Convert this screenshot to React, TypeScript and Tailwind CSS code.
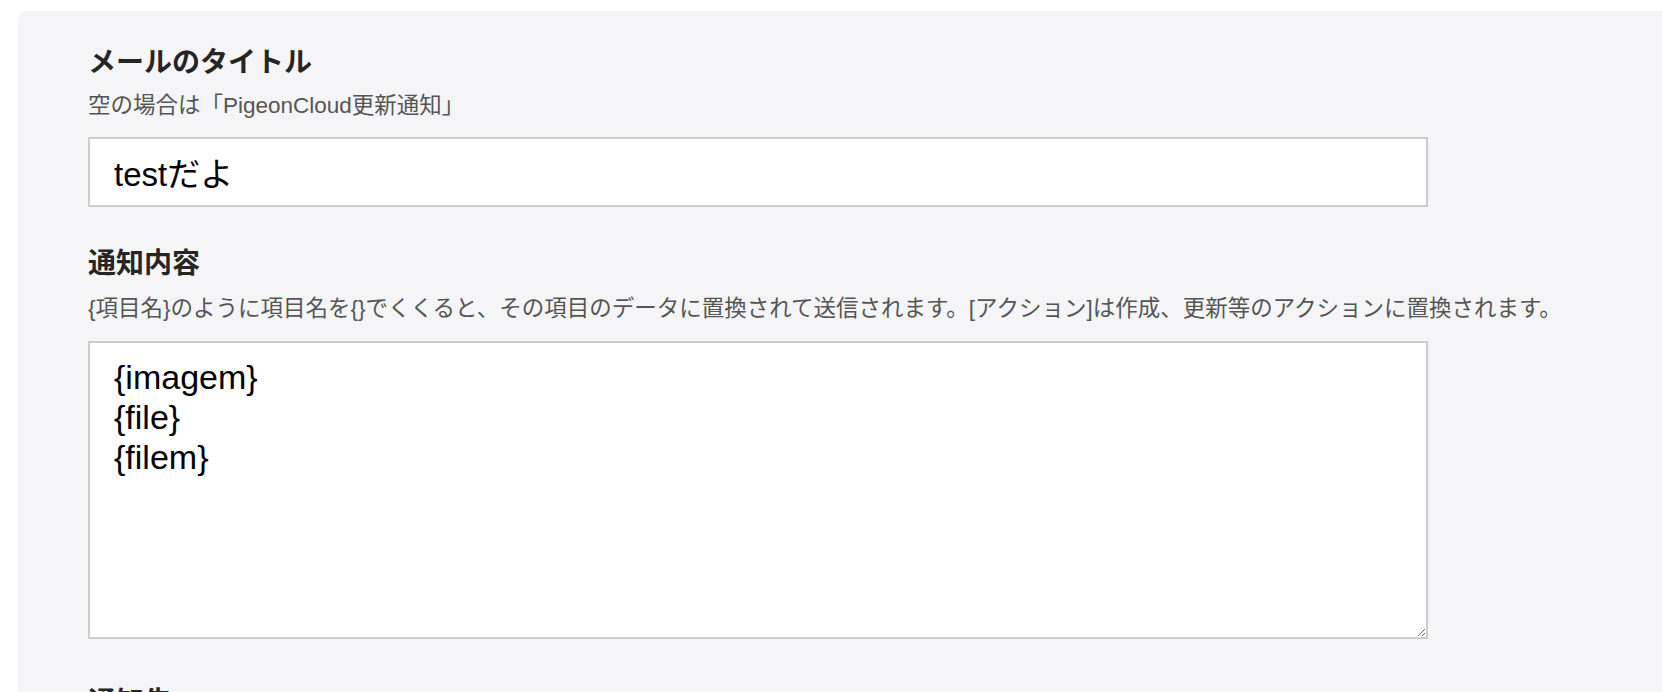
import { useState } from "react";

const font = "font-['Liberation_Sans','Noto_Sans_CJK_JP',sans-serif]";

function FieldLabel({ title, hint }: { title: string; hint: string }) {
  return (
    <>
      <h2 className="text-[28px] leading-[36px] font-bold text-[#252525]">{title}</h2>
      <p className="text-[22.5px] leading-[30px] text-[#555] mt-[10px]">{hint}</p>
    </>
  );
}

export default function App() {
  const [subject, setSubject] = useState("testだよ");
  const [body, setBody] = useState("{imagem}\n{file}\n{filem}");

  return (
    <div className={`min-h-screen bg-white pt-[11px] pl-[18px] ${font}`}>
      <div className="bg-[#f5f5f7] rounded-l-[8px] pt-[34px] pl-[70px] pb-[40px]">
        {/* Mail title */}
        <FieldLabel title="メールのタイトル" hint="空の場合は「PigeonCloud更新通知」" />
        <input
          type="text"
          value={subject}
          onChange={(e) => setSubject(e.target.value)}
          className={`block mt-[16px] w-[1340px] h-[70px] bg-white border-2 border-[#cccccc] px-[24px] text-[33px] text-black outline-none ${font}`}
        />

        {/* Body */}
        <div className="mt-[39px]">
          <h2 className="text-[28px] leading-[36px] font-bold text-[#252525]">通知内容</h2>
          <p className="text-[22.5px] leading-[30px] text-[#555] mt-[12px]">
            {"{項目名}のように項目名を{}でくくると、その項目のデータに置換されて送信されます。[アクション]は作成、更新等のアクションに置換されます。"}
          </p>
        </div>
        <textarea
          value={body}
          onChange={(e) => setBody(e.target.value)}
          className={`block mt-[17px] w-[1340px] h-[298px] bg-white border-2 border-[#cccccc] px-[24px] py-[14px] text-[34px] leading-[40px] text-black outline-none ${font}`}
        />

        {/* Next section (cut off) */}
        <h2 className="mt-[46px] text-[28px] leading-[36px] font-bold text-[#252525]">通知先</h2>
      </div>
    </div>
  );
}
